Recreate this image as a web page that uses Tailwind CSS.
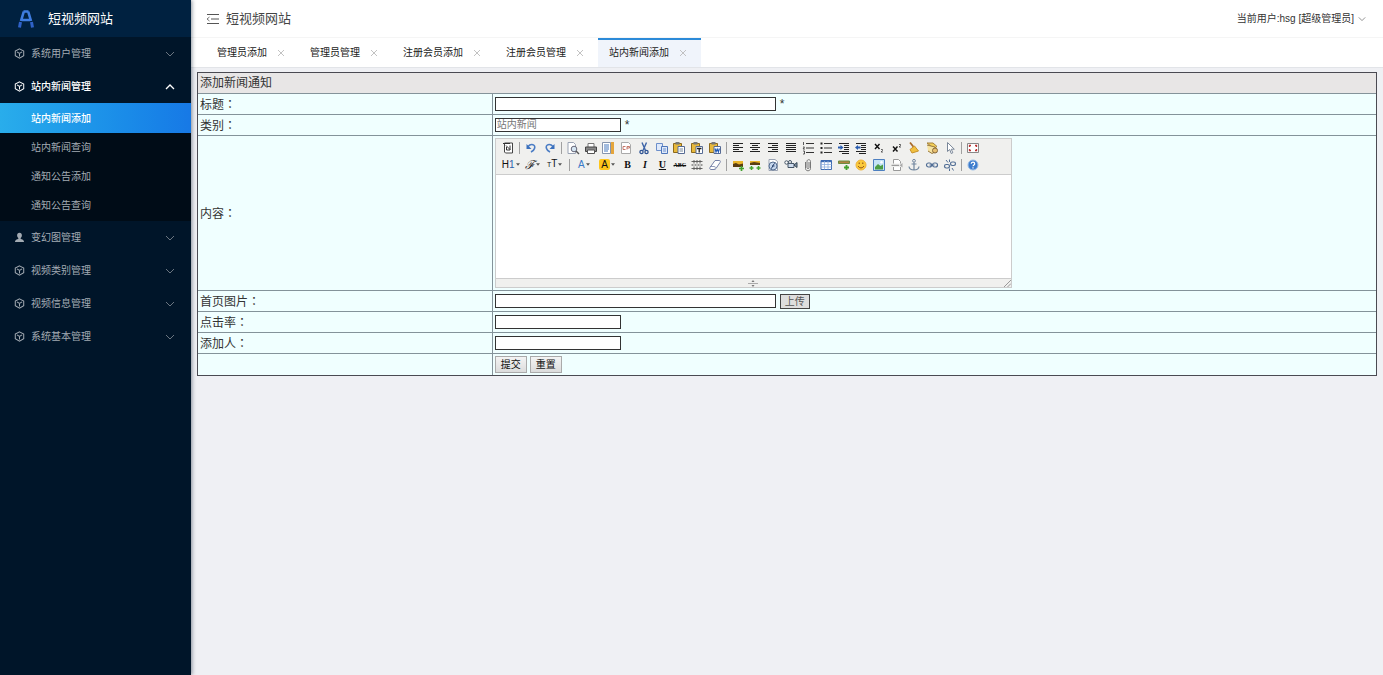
<!DOCTYPE html>
<html lang="zh-CN">
<head>
  <meta charset="UTF-8">
  <meta name="viewport" content="width=device-width, initial-scale=1.0">
  <title>短视频网站</title>
  <script src="https://cdn.jsdelivr.net/npm/@tailwindcss/browser@4"></script>
</head>
<body class="flex min-h-screen bg-[#eff0f4] font-['Liberation_Sans','Noto_Sans_CJK_SC',sans-serif] text-[10px] text-[#333]">

  <!-- Shared icons -->
  <svg class="hidden">
    <symbol id="cube" viewBox="0 0 12 12"><path d="M6 .9 10.6 3.3v5.2L6 11.1 1.4 8.5V3.3zM3.2 4.2 6 5.8l2.8-1.6M6 5.8v3.4" fill="none" stroke="currentColor" stroke-width="1.100"/></symbol>
    <symbol id="user" viewBox="0 0 12 12"><path d="M6 .8c1.7 0 2.6 1.200 2.600 2.800C8.600 5 7.900 6 7.300 6.600v1c1.500.5 3.600.9 3.700 3.400H1c.1-2.500 2.200-2.900 3.700-3.400v-1C4.100 6 3.400 5 3.400 3.600 3.400 2 4.300.8 6 .8z" fill="currentColor"/></symbol>
    <symbol id="down" viewBox="0 0 10 10"><path d="M1 3l4 4 4-4" fill="none" stroke="currentColor"/></symbol>
    <symbol id="up" viewBox="0 0 10 10"><path d="M1 7l4-4 4 4" fill="none" stroke="currentColor" stroke-width="1.300"/></symbol>
    <symbol id="close" viewBox="0 0 8 8"><path d="M1 1l6 6M7 1L1 7" fill="none" stroke="currentColor" stroke-width=".9"/></symbol>
    <symbol id="caret" viewBox="0 0 5 3"><path d="M0 0h5L2.500 3z" fill="#555"/></symbol>
    <symbol id="clip" viewBox="0 0 16 16"><path d="M2.500 3.500h8v9h-8z" fill="#e8b93c" stroke="#8d6a1c"/><path d="M4.500 2h4v2.500h-4z" fill="#777"/><path d="M7 6.500h6.500v7H7z" fill="#fff" stroke="#566b94"/></symbol>
  </svg>

  <!-- Sidebar -->
  <aside class="relative z-10 w-[191px] shrink-0 bg-[#001529] text-[#a3abb3] shadow-[1px_0_4px_rgba(0,21,41,0.45)]">
    <div class="flex h-[37px] items-center bg-[#002140] pl-[18px] text-[13px] text-white">
      <svg class="mr-[14px] h-[18px] w-4" viewBox="0 0 16 18" fill="none">
        <path d="M5.500 1.500h5M5.800 1.500 3 11M10.200 1.500 13 11M4 10h8" stroke="#3f7de0" stroke-width="2.600"/>
        <path d="M2.500 12 1.500 17.500M13.500 12l1 5.500" stroke="#2f62c8" stroke-width="3"/>
      </svg>
      短视频网站
    </div>
    <nav>
      <a href="#" class="flex h-[33px] items-center pl-[14px] pr-4">
        <svg class="mr-[6px] size-[11px]"><use href="#cube"/></svg>系统用户管理
        <svg class="ml-auto size-[10px] text-[#6b7681]"><use href="#down"/></svg>
      </a>
      <a href="#" class="flex h-[33px] items-center pl-[14px] pr-4 font-medium text-white">
        <svg class="mr-[6px] size-[11px]"><use href="#cube"/></svg>站内新闻管理
        <svg class="ml-auto size-[10px]"><use href="#up"/></svg>
      </a>
      <div class="bg-[#000c17] pb-px">
        <a href="#" class="flex h-[30px] items-center bg-linear-to-r from-[#29adeb] to-[#1779e6] pl-[31px] font-medium text-white">站内新闻添加</a>
        <a href="#" class="flex h-[29px] items-center pl-[31px]">站内新闻查询</a>
        <a href="#" class="flex h-[29px] items-center pl-[31px]">通知公告添加</a>
        <a href="#" class="flex h-[29px] items-center pl-[31px]">通知公告查询</a>
      </div>
      <a href="#" class="flex h-[33px] items-center pl-[14px] pr-4">
        <svg class="mr-[6px] size-[11px]"><use href="#user"/></svg>变幻图管理
        <svg class="ml-auto size-[10px] text-[#6b7681]"><use href="#down"/></svg>
      </a>
      <a href="#" class="flex h-[33px] items-center pl-[14px] pr-4">
        <svg class="mr-[6px] size-[11px]"><use href="#cube"/></svg>视频类别管理
        <svg class="ml-auto size-[10px] text-[#6b7681]"><use href="#down"/></svg>
      </a>
      <a href="#" class="flex h-[33px] items-center pl-[14px] pr-4">
        <svg class="mr-[6px] size-[11px]"><use href="#cube"/></svg>视频信息管理
        <svg class="ml-auto size-[10px] text-[#6b7681]"><use href="#down"/></svg>
      </a>
      <a href="#" class="flex h-[33px] items-center pl-[14px] pr-4">
        <svg class="mr-[6px] size-[11px]"><use href="#cube"/></svg>系统基本管理
        <svg class="ml-auto size-[10px] text-[#6b7681]"><use href="#down"/></svg>
      </a>
    </nav>
  </aside>

  <div class="min-w-0 flex-1">
    <!-- Top bar -->
    <header class="flex h-[37px] items-center justify-between bg-white pl-[15px] pr-[17px]">
      <div class="flex items-center text-[13px] text-[#444]">
        <svg class="mr-[7px] h-3 w-[13px]" viewBox="0 0 13 12" fill="none" stroke="#555"><path d="M1 1.500h12M5 6h8M1 10.500h12"/><path d="M3.500 4 1 6l2.500 2" stroke-width=".8"/></svg>
        短视频网站
      </div>
      <a href="#" class="flex items-center gap-1">当前用户:hsg [超级管理员]<svg class="size-2 text-[#777]"><use href="#down"/></svg></a>
    </header>

    <!-- Tabs -->
    <div class="flex h-[31px] border-y border-t-[#f5f5f5] border-b-[#e2e4e8] bg-white pl-[15px] text-[#222]">
      <div class="flex items-center pl-[11px] pr-[14px]"><a href="#">管理员添加</a><button type="button" class="ml-[10px]" aria-label="关闭"><svg class="size-2 text-[#bbb]"><use href="#close"/></svg></button></div>
      <div class="flex items-center pl-[11px] pr-[14px]"><a href="#">管理员管理</a><button type="button" class="ml-[10px]" aria-label="关闭"><svg class="size-2 text-[#bbb]"><use href="#close"/></svg></button></div>
      <div class="flex items-center pl-[11px] pr-[14px]"><a href="#">注册会员添加</a><button type="button" class="ml-[10px]" aria-label="关闭"><svg class="size-2 text-[#bbb]"><use href="#close"/></svg></button></div>
      <div class="flex items-center pl-[11px] pr-[14px]"><a href="#">注册会员管理</a><button type="button" class="ml-[10px]" aria-label="关闭"><svg class="size-2 text-[#bbb]"><use href="#close"/></svg></button></div>
      <div class="flex items-center bg-[#f0f4fb] pl-[11px] pr-[14px] shadow-[inset_0_2px_0_#2b8ad8]"><a href="#">站内新闻添加</a><button type="button" class="ml-[10px]" aria-label="关闭"><svg class="size-2 text-[#bbb]"><use href="#close"/></svg></button></div>
    </div>

    <!-- News form -->
    <form class="px-[6px] pt-1">
      <table class="w-full table-fixed border-collapse bg-[#f0ffff] text-[12px] leading-4 outline-1 -outline-offset-1 outline-[#4a4a52] [&_td]:border [&_td]:border-[#84939a] [&_td]:px-[2px] [&_td]:py-0">
        <colgroup><col class="w-1/4"><col></colgroup>
        <tr class="h-[21px] bg-[#e8e6e6]"><td colspan="2">添加新闻通知</td></tr>
        <tr class="h-[21px]">
          <td><label for="title">标题<span lang="zh-TW" class="font-['Noto_Sans_CJK_TC',sans-serif]">：</span></label></td>
          <td><div class="flex items-center gap-1"><input id="title" type="text" class="h-[14px] w-[281px] border border-[#333] bg-white px-px text-[10px]">*</div></td>
        </tr>
        <tr class="h-[21px]">
          <td><label for="category">类别<span lang="zh-TW" class="font-['Noto_Sans_CJK_TC',sans-serif]">：</span></label></td>
          <td><div class="flex items-center gap-1"><input id="category" type="text" value="站内新闻" readonly class="h-[14px] w-[126px] border border-[#333] bg-white px-px text-[10px] text-[#777]">*</div></td>
        </tr>
        <tr class="h-[155px]">
          <td><label for="content">内容<span lang="zh-TW" class="font-['Noto_Sans_CJK_TC',sans-serif]">：</span></label></td>
          <td>
            <div class="w-[517px] border border-[#ccc] bg-white">
              <!-- Editor toolbar -->
              <div class="border-b border-[#ccc] bg-[#f0f0ee] pb-px pl-1 text-[10px]">
                <div class="flex h-[17px] items-center">
                  <button type="button" aria-label="HTML代码"><svg class="size-4" viewBox="0 0 16 16"><path d="M4.500 3h8v10h-7L4.500 12z" fill="#fff" stroke="#444"/><path d="M3 3.500h7M6 5.500l4 4M10 5.500V10H6.500V7" stroke="#333" fill="none"/></svg></button>
                  <span class="mx-[3px] h-3 w-px bg-[#a0a0a0]"></span>
                  <div class="flex w-[35px] justify-between">
                    <button type="button" aria-label="后退"><svg class="size-4" viewBox="0 0 16 16"><path d="M5 6.500C8 3 13 4.500 11.500 8.500 11 10.500 9 11.500 8 12" fill="none" stroke="#4a7cc4" stroke-width="1.600"/><path d="M3.500 4v5h5z" fill="#3b70bd"/></svg></button>
                    <button type="button" aria-label="前进"><svg class="size-4" viewBox="0 0 16 16"><path d="M11 6.500C8 3 3 4.500 4.500 8.500 5 10.500 7 11.500 8 12" fill="none" stroke="#4a7cc4" stroke-width="1.600"/><path d="M12.500 4v5h-5z" fill="#3b70bd"/></svg></button>
                  </div>
                  <span class="mx-[3px] h-3 w-px bg-[#a0a0a0]"></span>
                  <div class="flex w-[158px] justify-between">
                    <button type="button" aria-label="预览"><svg class="size-4" viewBox="0 0 16 16"><path d="M3 2.500h5.500l2 2v9H3z" fill="#fff" stroke="#9aa3b3"/><circle cx="9" cy="9" r="2.800" fill="#d5e6f3" stroke="#667"/><path d="M11 11l3 3" stroke="#555" stroke-width="1.400"/></svg></button>
                    <button type="button" aria-label="打印"><svg class="size-4" viewBox="0 0 16 16"><path d="M5 7V3.500h6V7" fill="#fff" stroke="#777"/><path d="M2.500 7h11v4.500h-11z" fill="#888" stroke="#444"/><path d="M4.500 10h7v3.500h-7z" fill="#fff" stroke="#555"/></svg></button>
                    <button type="button" aria-label="插入模板"><svg class="size-4" viewBox="0 0 16 16"><path d="M2.500 2.500h8v11h-8z" fill="#fff" stroke="#8795ad"/><path d="M4 5h5M4 7h5M4 9h5M4 11h4" stroke="#4778bd"/><path d="M11 2h3v12h-3z" fill="#e5a53c"/></svg></button>
                    <button type="button" aria-label="插入程序代码"><svg class="size-4" viewBox="0 0 16 16"><path d="M3.500 2.500h7l2 2v9h-9z" fill="#fff" stroke="#aaa"/><path d="M7.500 6.500H5v3h2.500M9 9.500v-3h2.500V8H9" fill="none" stroke="#c6786a"/></svg></button>
                    <button type="button" aria-label="剪切"><svg class="size-4" viewBox="0 0 16 16"><path d="M6 2.500l3.500 8M10.500 2.500l-3.500 8" stroke="#3e64a8" stroke-width="1.400"/><circle cx="5.500" cy="12" r="1.600" fill="none" stroke="#2d5293" stroke-width="1.300"/><circle cx="10.500" cy="12" r="1.600" fill="none" stroke="#2d5293" stroke-width="1.300"/></svg></button>
                    <button type="button" aria-label="复制"><svg class="size-4" viewBox="0 0 16 16"><path d="M2.500 3.500h6v7h-6z" fill="#dfe9fa" stroke="#6c8fcb"/><path d="M7.500 6.500h6v7h-6z" fill="#dfe9fa" stroke="#4f77bb"/><path d="M9 9h3M9 11h3" stroke="#6c8fcb"/></svg></button>
                    <button type="button" aria-label="粘贴"><svg class="size-4" viewBox="0 0 16 16"><use href="#clip"/><path d="M8.500 9h3.500M8.500 11h3.500" stroke="#789"/></svg></button>
                    <button type="button" aria-label="粘贴为无格式文本"><svg class="size-4" viewBox="0 0 16 16"><use href="#clip"/><path d="M8 8.500h4.500M10.200 8.500v4" stroke="#222" stroke-width="1.300"/></svg></button>
                    <button type="button" aria-label="从Word粘贴"><svg class="size-4" viewBox="0 0 16 16"><use href="#clip"/><path d="M8 8.500l1 3.500 1.200-3 1.200 3 1-3.500" fill="none" stroke="#235bb5" stroke-width="1.200"/></svg></button>
                  </div>
                  <span class="mx-[3px] h-3 w-px bg-[#a0a0a0]"></span>
                  <div class="flex w-[228px] justify-between">
                    <button type="button" aria-label="左对齐"><svg class="size-4" viewBox="0 0 16 16"><path d="M3 3.500h10M3 5.500h6M3 7.500h10M3 9.500h6M3 11.500h10" stroke="#222"/></svg></button>
                    <button type="button" aria-label="居中"><svg class="size-4" viewBox="0 0 16 16"><path d="M3 3.500h10M5 5.500h6M3 7.500h10M5 9.500h6M3 11.500h10" stroke="#222"/></svg></button>
                    <button type="button" aria-label="右对齐"><svg class="size-4" viewBox="0 0 16 16"><path d="M3 3.500h10M7 5.500h6M3 7.500h10M7 9.500h6M3 11.500h10" stroke="#222"/></svg></button>
                    <button type="button" aria-label="两端对齐"><svg class="size-4" viewBox="0 0 16 16"><path d="M3 3.500h10M3 5.500h10M3 7.500h10M3 9.500h10M3 11.500h10" stroke="#222"/></svg></button>
                    <button type="button" aria-label="编号"><svg class="size-4" viewBox="0 0 16 16"><path d="M6 3.500h8M6 8h8M6 12.500h8" stroke="#333"/><path d="M3.500 2v3M3 7h1.500L3 9h2M3 11h1.500v3H3" fill="none" stroke="#333" stroke-width=".8"/></svg></button>
                    <button type="button" aria-label="项目符号"><svg class="size-4" viewBox="0 0 16 16"><path d="M6 3.500h8M6 8h8M6 12.500h8" stroke="#333"/><path d="M2.500 3.500h2M2.500 8h2M2.500 12.500h2" stroke="#222" stroke-width="2"/></svg></button>
                    <button type="button" aria-label="增加缩进"><svg class="size-4" viewBox="0 0 16 16"><path d="M3 3.500h10M8 5.500h5M8 7.500h5M8 9.500h5M3 11.500h10M6 13.500h7" stroke="#222"/><path d="M2 7.500h3" stroke="#2a5db0" stroke-width="2"/><path d="M4.500 5l3 2.500-3 2.500z" fill="#2a5db0"/></svg></button>
                    <button type="button" aria-label="减少缩进"><svg class="size-4" viewBox="0 0 16 16"><path d="M3 3.500h10M8 5.500h5M8 7.500h5M8 9.500h5M3 11.500h10M6 13.500h7" stroke="#222"/><path d="M4 7.500h3.500" stroke="#2a5db0" stroke-width="2"/><path d="M5 5L2 7.500 5 10z" fill="#2a5db0"/></svg></button>
                    <button type="button" aria-label="下标"><svg class="size-4" viewBox="0 0 16 16"><path d="M4 4l4.500 5M8.500 4L4 9" stroke="#111" stroke-width="1.400"/><path d="M10 9.500h1.500v1L10 12h2" fill="none" stroke="#444" stroke-width=".8"/></svg></button>
                    <button type="button" aria-label="上标"><svg class="size-4" viewBox="0 0 16 16"><path d="M4 6.500l4.500 5M8.500 6.500l-4.500 5" stroke="#111" stroke-width="1.400"/><path d="M10 4.500h1.500v1L10 7h2" fill="none" stroke="#333" stroke-width=".8"/></svg></button>
                    <button type="button" aria-label="清理HTML代码"><svg class="size-4" viewBox="0 0 16 16"><path d="M4 2.500l4 5" stroke="#a8692a" stroke-width="1.800"/><path d="M8.500 6l4 5-6.500 2-2-3.500z" fill="#f0c040" stroke="#c8922c"/></svg></button>
                    <button type="button" aria-label="一键排版"><svg class="size-4" viewBox="0 0 16 16"><path d="M3 3h6l4 3.500-3 2z" fill="#f2cf58" stroke="#a6823b"/><path d="M3 5l8 2v5l-3 1.500L4 11" fill="#f6e3a1" stroke="#9a7a3e"/><circle cx="11" cy="10.500" r="2.500" fill="#e8c070" stroke="#86683a"/></svg></button>
                    <button type="button" aria-label="全选"><svg class="size-4" viewBox="0 0 16 16"><path d="M5.500 2.500v9l2.200-2 1.500 4 1.600-.7-1.500-3.600h3z" fill="#fff" stroke="#7a8799"/></svg></button>
                  </div>
                  <span class="mx-[3px] h-3 w-px bg-[#a0a0a0]"></span>
                  <button type="button" aria-label="全屏显示"><svg class="size-4" viewBox="0 0 16 16"><path d="M2.500 3.500h11v9h-11z" fill="#fff" stroke="#888"/><path d="M4.500 7V5.500H6M10 5.500h1.500V7M4.500 9v1.500H6M10 10.500h1.500V9" fill="none" stroke="#b33" stroke-width="1.300"/></svg></button>
                </div>
                <div class="flex h-[17px] items-center text-[#111]">
                  <button type="button" aria-label="段落" class="flex w-[22px] items-center justify-center gap-px"><span>H<span class="text-[#2d62ad]">1</span></span><svg class="h-[3px] w-1"><use href="#caret"/></svg></button>
                  <button type="button" aria-label="字体" class="flex w-[22px] items-center justify-center gap-px"><span class="font-['Liberation_Serif'] text-[12px] italic leading-4">ℱ</span><svg class="h-[3px] w-1"><use href="#caret"/></svg></button>
                  <button type="button" aria-label="文字大小" class="flex w-[22px] items-center justify-center gap-px"><span><small class="text-[7px]">T</small>T</span><svg class="h-[3px] w-1"><use href="#caret"/></svg></button>
                  <span class="mx-[3px] h-3 w-px bg-[#a0a0a0]"></span>
                  <div class="flex w-[150px] justify-between">
                    <button type="button" aria-label="文字颜色" class="flex w-[22px] items-center justify-center gap-px text-[#3a7ac8]">A<svg class="h-[3px] w-1"><use href="#caret"/></svg></button>
                    <button type="button" aria-label="文字背景" class="flex w-[22px] items-center justify-center gap-px"><span class="rounded-[2px] bg-[#ffc61a] px-[2px] leading-[11px]">A</span><svg class="h-[3px] w-1"><use href="#caret"/></svg></button>
                    <button type="button" aria-label="粗体" class="w-4 font-['Liberation_Serif'] font-black">B</button>
                    <button type="button" aria-label="斜体" class="w-4 font-['Liberation_Serif'] font-black italic">I</button>
                    <button type="button" aria-label="下划线" class="w-4 font-['Liberation_Serif'] font-black underline">U</button>
                    <button type="button" aria-label="删除线" class="flex w-4 items-center justify-center font-['Liberation_Serif'] text-[6px] font-black line-through">ABC</button>
                    <button type="button" aria-label="行距"><svg class="size-4" viewBox="0 0 16 16"><path d="M2.500 8h11" stroke="#444" stroke-dasharray="2 1"/><path d="M2.500 4.500h11M2.500 11.500h11M5 3v3.500M8 3v3.500M11 3v3.500M5 9.500V13M8 9.500V13M11 9.500V13" stroke="#555" stroke-width=".9"/></svg></button>
                    <button type="button" aria-label="删除格式"><svg class="size-4" viewBox="0 0 16 16"><path d="M8 3.500h4.500c1 0 1 1 .5 2L9 11.500c-.5.7-1 1-2 1H4c-1.200 0-1.500-1-1-2z" fill="#fff" stroke="#7581a8"/><path d="M3 9.500h4.500c1 0 1 1 .5 2" fill="none" stroke="#7581a8" stroke-width=".8"/></svg></button>
                  </div>
                  <span class="mx-[3px] h-3 w-px bg-[#a0a0a0]"></span>
                  <div class="flex w-[228px] justify-between">
                    <button type="button" aria-label="图片"><svg class="size-4" viewBox="0 0 16 16"><path d="M3 4h10v5H3z" fill="#e9b52c"/><path d="M3 7l3-1 3 1.500 4-1V10H3z" fill="#5a3d12"/><path d="M11.500 9v5M9 11.500h5" stroke="#42a32e" stroke-width="1.700"/></svg></button>
                    <button type="button" aria-label="批量图片上传"><svg class="size-4" viewBox="0 0 16 16"><path d="M3 4h10v4H3z" fill="#e9b52c"/><path d="M3 6l4-1 6 1v2H3z" fill="#5a3d12"/><path d="M4.500 9v4M2.500 11h4M11.500 9v4M9.500 11h4" stroke="#42a32e" stroke-width="1.500"/></svg></button>
                    <button type="button" aria-label="Flash"><svg class="size-4" viewBox="0 0 16 16"><path d="M4 2.500h6l2.500 2v9H4z" fill="#fff" stroke="#9aa3b3"/><circle cx="8" cy="9" r="4" fill="#c5d6ec" stroke="#566e91"/><path d="M9.800 6.500C8 6.500 7.500 11.500 6 11.500M7 9h2.500" fill="none" stroke="#243f6b"/></svg></button>
                    <button type="button" aria-label="视音频"><svg class="size-4" viewBox="0 0 16 16"><path d="M5 6.500h6v4H5z" fill="#cfdced" stroke="#456"/><circle cx="3.500" cy="5.500" r="1.700" fill="#fff" stroke="#456"/><circle cx="7" cy="5" r="1.500" fill="#fff" stroke="#456"/><path d="M11 8l3-2.500v5z" fill="#89a" stroke="#345"/></svg></button>
                    <button type="button" aria-label="插入文件"><svg class="size-4" viewBox="0 0 16 16"><path d="M5.500 5v6.500c0 3 5 3 5 0v-7c0-2.500-3.500-2.500-3.500 0v6c0 1.500 2 1.500 2 0V5" fill="none" stroke="#777"/></svg></button>
                    <button type="button" aria-label="表格"><svg class="size-4" viewBox="0 0 16 16"><path d="M3 3.500h10.500v9H3z" fill="#fff" stroke="#3e6cb3"/><path d="M3 4.200h10.500" stroke="#3e6cb3" stroke-width="2"/><path d="M3 7.500h10.500M3 10h10.500M6.500 4v8.500M10 4v8.500" stroke="#8fb0de" stroke-width=".8"/></svg></button>
                    <button type="button" aria-label="插入横线"><svg class="size-4" viewBox="0 0 16 16"><path d="M2.500 4h11v2.500h-11z" fill="#b08440" stroke="#6b8c42"/><path d="M10.500 8v5M8 10.500h5" stroke="#42a32e" stroke-width="1.800"/></svg></button>
                    <button type="button" aria-label="插入表情"><svg class="size-4" viewBox="0 0 16 16"><circle cx="8" cy="8" r="5" fill="#fbca3b" stroke="#efb238"/><path d="M6.200 5.500v1.500M9.800 5.500v1.500M5.200 9c1 2.500 4.600 2.500 5.600 0" fill="none" stroke="#8b4a13"/></svg></button>
                    <button type="button" aria-label="地图"><svg class="size-4" viewBox="0 0 16 16"><path d="M2.500 2.500h11v11h-11z" fill="#c6e3f6" stroke="#4d7fc0"/><path d="M4 12.500V10l3-3 2.500 2 2.500-1.500v5z" fill="#4d9e45"/><circle cx="10.500" cy="5.200" r="1.200" fill="#fff"/></svg></button>
                    <button type="button" aria-label="插入分页符"><svg class="size-4" viewBox="0 0 16 16"><path d="M4.500 6.500v-4h5l2 2v2M4.500 10v3.500h7V10" fill="#fff" stroke="#999"/><path d="M2.500 8.300H10" stroke="#888"/><path d="M13.500 6v4.500L10.500 8.300z" fill="#aaa"/></svg></button>
                    <button type="button" aria-label="锚点"><svg class="size-4" viewBox="0 0 16 16"><circle cx="8" cy="3.800" r="1.400" fill="none" stroke="#71869e"/><path d="M8 5.500v7.500M5.500 7h5M3 9.500c.5 4.500 9.500 4.500 10 0" fill="none" stroke="#71869e" stroke-width="1.200"/></svg></button>
                    <button type="button" aria-label="超级链接"><svg class="size-4" viewBox="0 0 16 16"><rect x="2.500" y="6" width="5" height="4" rx="2" fill="none" stroke="#526f96" stroke-width="1.200"/><rect x="8.500" y="6" width="5" height="4" rx="2" fill="none" stroke="#526f96" stroke-width="1.200"/><path d="M5.500 8h5" stroke="#526f96"/></svg></button>
                    <button type="button" aria-label="取消超级链接"><svg class="size-4" viewBox="0 0 16 16"><rect x="2.500" y="7.500" width="5" height="3.500" rx="1.700" fill="none" stroke="#526f96" stroke-width="1.200"/><rect x="8.500" y="5" width="5" height="3.500" rx="1.700" fill="none" stroke="#526f96" stroke-width="1.200"/><path d="M4 3l2 2.500M7.500 2.500V5M10 11l1.500 2.500M7.500 11.500V14" stroke="#526f96"/></svg></button>
                  </div>
                  <span class="mx-[3px] h-3 w-px bg-[#a0a0a0]"></span>
                  <button type="button" aria-label="关于"><svg class="size-4" viewBox="0 0 16 16"><circle cx="8" cy="8" r="5" fill="#3c7ccd" stroke="#9bbde6"/><path d="M6.300 6.700c0-2.200 3.400-2 3.400 0C9.700 8 8 7.800 8 9.300M8 10.300v1.200" fill="none" stroke="#fff" stroke-width="1.200"/></svg></button>
                </div>
              </div>
              <textarea id="content" class="block h-[103px] w-full resize-none p-1 outline-none"></textarea>
              <div class="relative flex h-[9px] items-center justify-center border-t border-[#ccc] bg-[#f0f0ee]">
                <svg class="h-[7px] w-3" viewBox="0 0 12 7"><path d="M1 3.500h10" stroke="#aaa"/><path d="M6 0l1.500 2h-3zM6 7l1.500-2h-3z" fill="#777"/></svg>
                <svg class="absolute bottom-0 right-0 size-[7px]" viewBox="0 0 7 7"><path d="M0 7l7-7M3.500 7 7 3.500" stroke="#999"/></svg>
              </div>
            </div>
          </td>
        </tr>
        <tr class="h-[21px]">
          <td><label for="cover">首页图片<span lang="zh-TW" class="font-['Noto_Sans_CJK_TC',sans-serif]">：</span></label></td>
          <td><div class="flex items-center gap-1"><input id="cover" type="text" class="h-[14px] w-[281px] border border-[#333] bg-white px-px text-[10px]"><button type="button" class="h-[15px] w-[30px] border border-[#444] bg-[#dedede] text-[10px] leading-[13px] text-[#555]">上传</button></div></td>
        </tr>
        <tr class="h-[21px]">
          <td><label for="hits">点击率<span lang="zh-TW" class="font-['Noto_Sans_CJK_TC',sans-serif]">：</span></label></td>
          <td><input id="hits" type="text" class="block h-[14px] w-[126px] border border-[#333] bg-white px-px text-[10px]"></td>
        </tr>
        <tr class="h-[21px]">
          <td><label for="author">添加人<span lang="zh-TW" class="font-['Noto_Sans_CJK_TC',sans-serif]">：</span></label></td>
          <td><input id="author" type="text" class="block h-[14px] w-[126px] border border-[#333] bg-white px-px text-[10px]"></td>
        </tr>
        <tr class="h-[22px]">
          <td></td>
          <td><div class="flex gap-[3px] text-[#111]">
            <button type="submit" class="h-[17px] w-8 border border-[#aaa] bg-linear-to-b from-[#f4f4f4] to-[#dcdcdc] text-[10px] leading-[15px]">提交</button>
            <button type="reset" class="h-[17px] w-8 border border-[#aaa] bg-linear-to-b from-[#f4f4f4] to-[#dcdcdc] text-[10px] leading-[15px]">重置</button>
          </div></td>
        </tr>
      </table>
    </form>
  </div>
</body>
</html>
